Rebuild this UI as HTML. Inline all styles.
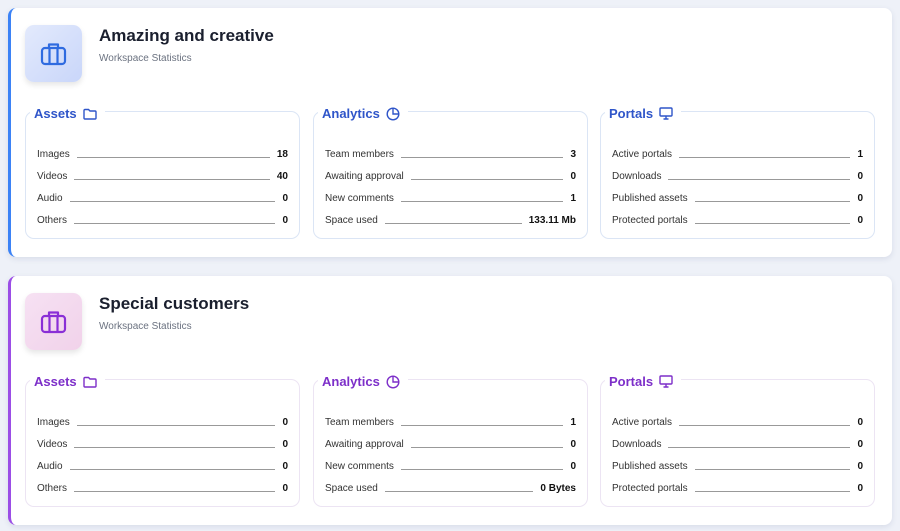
<!DOCTYPE html>
<html><head><style>
*{box-sizing:border-box;margin:0;padding:0}
body{width:900px;height:531px;background:#eef1f8;font-family:"Liberation Sans",sans-serif;position:relative;overflow:hidden;color:#1f2937}
.card{position:absolute;left:8px;width:884px;background:#fff;border-radius:8px;box-shadow:0 2px 6px rgba(60,70,120,.12)}
.c1{top:8px;height:249px;border-left:3px solid #3b82f6}
.c2{top:276px;height:249px;border-left:3px solid #9b4de6}
.ib{position:absolute;left:14px;top:17px;width:57px;height:57px;border-radius:9px;box-shadow:0 3px 6px rgba(0,0,0,.1)}
.c1 .ib{background:linear-gradient(135deg,#e3eafc,#c9d6fa)}
.c2 .ib{background:linear-gradient(135deg,#f6e1f3,#f1d2ea)}
.ib svg{position:absolute;left:15px;top:16px}
.t{position:absolute;left:88px;top:18px;font-size:17px;font-weight:bold;color:#1a1f2e}
.s{position:absolute;left:88px;top:45px;font-size:10px;color:#6b7280}
.fs{position:absolute;top:103px;width:275px;height:128px;border:1px solid #dbe5f5;border-radius:9px}
.c2 .fs{border-color:#ece4f3}
.lg{position:absolute;left:4px;top:-6px;background:#fff;padding:0 8px 0 4px;font-size:13px;font-weight:bold;display:flex;align-items:center;gap:6px}
.c1 .lg{color:#2f55c9}.c2 .lg{color:#7d2fc9}
.row{position:absolute;left:11px;right:11px;display:flex;align-items:flex-end;font-size:10px;color:#333}
.row .l{flex:1;border-bottom:1px solid #999;margin:0 7px 2px;height:1px}
.row b{color:#111}
</style></head><body>

<div class="card c1">
 <div class="ib"><svg width="27" height="25" viewBox="0 0 27 25" fill="none" stroke="#2f6be0" stroke-width="2.2" stroke-linejoin="round"><rect x="2" y="7" width="23" height="16" rx="3"/><path d="M9 7V3.5h9V7M9.5 7v16M17.5 7v16"/></svg></div>
 <div class="t">Amazing and creative</div>
 <div class="s">Workspace Statistics</div>
 <div class="fs" style="left:14px"><div class="lg">Assets <svg width="14" height="12" viewBox="0 0 14 12" fill="none" stroke="currentColor" stroke-width="1.4"><path d="M1 2.5a1 1 0 0 1 1-1h3.5l1.5 1.5h5a1 1 0 0 1 1 1V10a1 1 0 0 1-1 1H2a1 1 0 0 1-1-1z"/></svg></div>
  <div class="row" style="top:37px"><span>Images</span><span class="l"></span><b>18</b></div>
  <div class="row" style="top:59px"><span>Videos</span><span class="l"></span><b>40</b></div>
  <div class="row" style="top:81px"><span>Audio</span><span class="l"></span><b>0</b></div>
  <div class="row" style="top:103px"><span>Others</span><span class="l"></span><b>0</b></div></div>
 <div class="fs" style="left:302px"><div class="lg">Analytics <svg width="14" height="14" viewBox="0 0 14 14" fill="none" stroke="currentColor" stroke-width="1.4"><circle cx="7" cy="7" r="5.8"/><path d="M7 1.2V7h5.8"/></svg></div>
  <div class="row" style="top:37px"><span>Team members</span><span class="l"></span><b>3</b></div>
  <div class="row" style="top:59px"><span>Awaiting approval</span><span class="l"></span><b>0</b></div>
  <div class="row" style="top:81px"><span>New comments</span><span class="l"></span><b>1</b></div>
  <div class="row" style="top:103px"><span>Space used</span><span class="l"></span><b>133.11 Mb</b></div></div>
 <div class="fs" style="left:589px"><div class="lg">Portals <svg width="14" height="13" viewBox="0 0 14 13" fill="none" stroke="currentColor" stroke-width="1.4"><rect x="1" y="1" width="12" height="8" rx="1"/><path d="M7 9v3M4.5 12h5"/></svg></div>
  <div class="row" style="top:37px"><span>Active portals</span><span class="l"></span><b>1</b></div>
  <div class="row" style="top:59px"><span>Downloads</span><span class="l"></span><b>0</b></div>
  <div class="row" style="top:81px"><span>Published assets</span><span class="l"></span><b>0</b></div>
  <div class="row" style="top:103px"><span>Protected portals</span><span class="l"></span><b>0</b></div></div>
</div>

<div class="card c2">
 <div class="ib"><svg width="27" height="25" viewBox="0 0 27 25" fill="none" stroke="#8a2fd6" stroke-width="2.2" stroke-linejoin="round"><rect x="2" y="7" width="23" height="16" rx="3"/><path d="M9 7V3.5h9V7M9.5 7v16M17.5 7v16"/></svg></div>
 <div class="t">Special customers</div>
 <div class="s">Workspace Statistics</div>
 <div class="fs" style="left:14px"><div class="lg">Assets <svg width="14" height="12" viewBox="0 0 14 12" fill="none" stroke="currentColor" stroke-width="1.4"><path d="M1 2.5a1 1 0 0 1 1-1h3.5l1.5 1.5h5a1 1 0 0 1 1 1V10a1 1 0 0 1-1 1H2a1 1 0 0 1-1-1z"/></svg></div>
  <div class="row" style="top:37px"><span>Images</span><span class="l"></span><b>0</b></div>
  <div class="row" style="top:59px"><span>Videos</span><span class="l"></span><b>0</b></div>
  <div class="row" style="top:81px"><span>Audio</span><span class="l"></span><b>0</b></div>
  <div class="row" style="top:103px"><span>Others</span><span class="l"></span><b>0</b></div></div>
 <div class="fs" style="left:302px"><div class="lg">Analytics <svg width="14" height="14" viewBox="0 0 14 14" fill="none" stroke="currentColor" stroke-width="1.4"><circle cx="7" cy="7" r="5.8"/><path d="M7 1.2V7h5.8"/></svg></div>
  <div class="row" style="top:37px"><span>Team members</span><span class="l"></span><b>1</b></div>
  <div class="row" style="top:59px"><span>Awaiting approval</span><span class="l"></span><b>0</b></div>
  <div class="row" style="top:81px"><span>New comments</span><span class="l"></span><b>0</b></div>
  <div class="row" style="top:103px"><span>Space used</span><span class="l"></span><b>0 Bytes</b></div></div>
 <div class="fs" style="left:589px"><div class="lg">Portals <svg width="14" height="13" viewBox="0 0 14 13" fill="none" stroke="currentColor" stroke-width="1.4"><rect x="1" y="1" width="12" height="8" rx="1"/><path d="M7 9v3M4.5 12h5"/></svg></div>
  <div class="row" style="top:37px"><span>Active portals</span><span class="l"></span><b>0</b></div>
  <div class="row" style="top:59px"><span>Downloads</span><span class="l"></span><b>0</b></div>
  <div class="row" style="top:81px"><span>Published assets</span><span class="l"></span><b>0</b></div>
  <div class="row" style="top:103px"><span>Protected portals</span><span class="l"></span><b>0</b></div></div>
</div>
</body></html>
